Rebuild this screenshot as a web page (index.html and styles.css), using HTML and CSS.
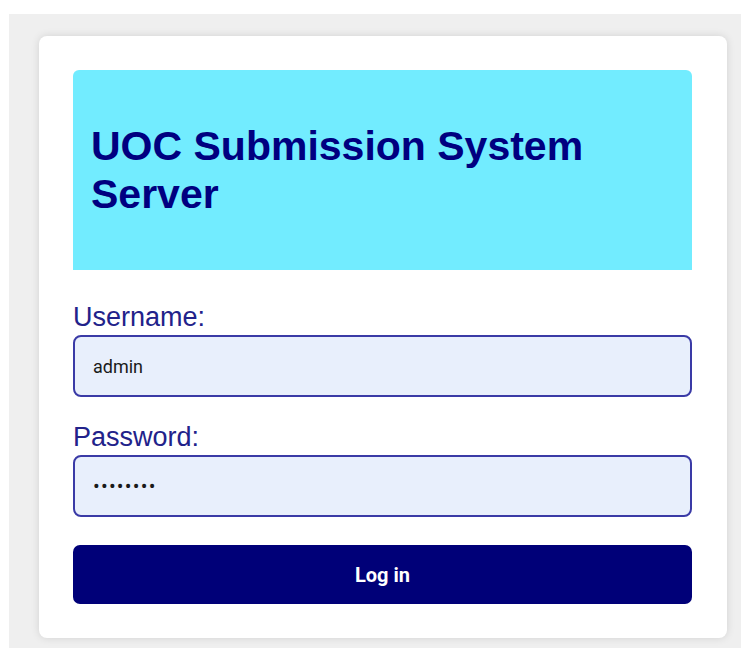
FILE: index.html
```html
<!DOCTYPE html>
<html lang="en">
<head>
<meta charset="utf-8">
<title>UOC Submission System Server</title>
<link rel="stylesheet" href="styles.css">
</head>
<body>
<div class="page">
  <main class="card">
    <header class="banner">
      <h1 class="banner-title">UOC Submission System Server</h1>
    </header>
    <form class="login-form">
      <label class="field-label" for="username">Username:</label>
      <input class="field-input" id="username" type="text" value="admin">
      <label class="field-label" for="password">Password:</label>
      <input class="field-input" id="password" type="password" value="password">
      <button class="submit-btn" type="button">Log in</button>
    </form>
  </main>
</div>
</body>
</html>
```
FILE: styles.css
```css
html, body {
  margin: 0;
  padding: 0;
  background: #ffffff;
}

.page {
  margin: 14px 0 0 9px;
  padding: 22px 14px 12px 30px;
  background: #efefef;
  min-height: 620px;
  box-sizing: border-box;
}

.card {
  background: #ffffff;
  border-radius: 8px;
  box-shadow: 0 0 8px rgba(0, 0, 0, 0.12);
  padding: 34px 35px 34px 34px;
  font-family: "Liberation Sans", Arial, sans-serif;
}

.banner {
  height: 200px;
  background: #72ecff;
  border-radius: 6px 6px 0 0;
  display: flex;
  align-items: center;
  padding: 0 18px;
}

.banner-title {
  margin: 0;
  color: #000080;
  font-size: 41px;
  font-weight: bold;
  line-height: 48px;
}

.login-form {
  display: flex;
  flex-direction: column;
  padding-top: 31px;
}

.field-label {
  color: #22228a;
  font-size: 27px;
  line-height: 32px;
  margin-bottom: 2px;
}

.field-input {
  height: 62px;
  box-sizing: border-box;
  border: 2px solid #3a3aa6;
  border-radius: 8px;
  background: #e8effc;
  padding: 0 18px;
  font-family: Roboto, "Liberation Sans", sans-serif;
  font-size: 18px;
  color: #1a1a1a;
  margin-bottom: 24px;
  outline: none;
}

#password {
  font-size: 20px;
  letter-spacing: 1.2px;
  margin-bottom: 28px;
}

.submit-btn {
  height: 59px;
  border: none;
  border-radius: 7px;
  background: #000078;
  color: #ffffff;
  font-family: Roboto, "Liberation Sans", sans-serif;
  font-size: 20px;
  font-weight: bold;
  cursor: pointer;
}
```
